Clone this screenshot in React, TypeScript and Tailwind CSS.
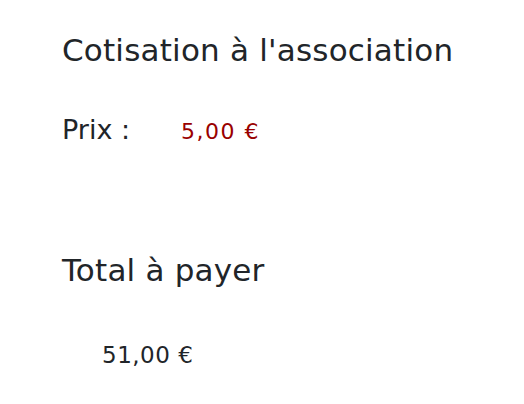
export default function App() {
  return (
    <main
      className="w-[524px] h-[404px] bg-white pl-[62px] text-[#212529]"
      style={{ fontFamily: '"DejaVu Sans", "Noto Sans", sans-serif' }}
    >
      <h2 className="pt-[32px] text-[31px] leading-[36px] font-medium tracking-[0.2px]">
        Cotisation à l'association
      </h2>

      <div className="mt-[46px] flex items-baseline text-[27px] leading-[32px] font-normal">
        <span className="w-[119px]">Prix :</span>
        <span className="text-[#990000] text-[22px] tracking-[1.5px]">5,00 €</span>
      </div>

      <h2 className="mt-[104px] text-[31px] leading-[36px] font-medium tracking-[0.2px]">
        Total à payer
      </h2>

      <p className="mt-[53px] pl-[40px] text-[23px] leading-[28px] font-normal tracking-[0.5px]">
        51,00 €
      </p>
    </main>
  )
}
